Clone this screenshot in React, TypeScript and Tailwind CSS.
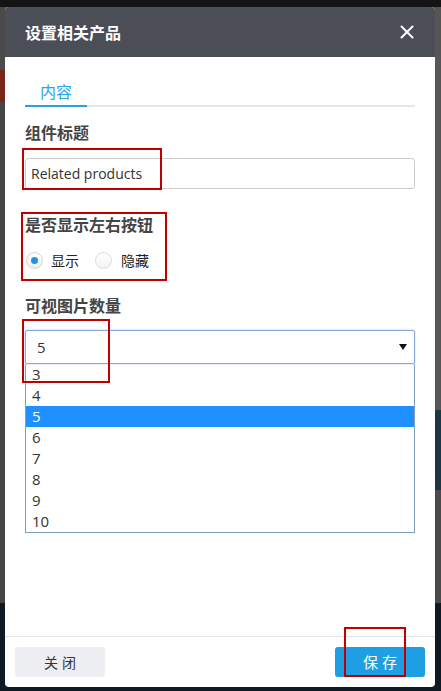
import React from "react";

const cjk = { fontFamily: '"Noto Sans CJK SC", "Noto Sans", sans-serif' };
const latin = { fontFamily: '"Open Sans", "Noto Sans CJK SC", sans-serif' };

export default function App() {
  const options = ["3", "4", "5", "6", "7", "8", "9", "10"];
  return (
    <div className="relative w-[441px] h-[691px] overflow-hidden bg-[#474747]" style={cjk}>
      {/* dimmed background page */}
      <div className="flex flex-col h-full">
        <div className="h-[7px] bg-[#141414]" />
        <div className="flex-1 flex justify-between">
          <div className="w-[5px] flex flex-col">
            <div className="h-[63px] bg-[#4a4a4a]" />
            <div className="h-[32px] bg-[#7a241c]" />
            <div className="flex-1 bg-[#454545]" />
          </div>
          <div className="w-[6px] flex flex-col">
            <div className="h-[403px] bg-[#565656]" />
            <div className="h-[80px] bg-[#1c3644]" />
            <div className="flex-1 bg-[#4a4a4a]" />
          </div>
        </div>
        <div className="h-[88px] bg-[#0f1a22]" />
      </div>

      {/* modal */}
      <div className="absolute left-[5px] top-[7px] w-[430px] h-[680px] bg-white rounded-[4px] flex flex-col overflow-hidden">
        <div className="h-[50px] bg-[#4b4e57] px-[20px] flex items-center justify-between shrink-0">
          <span className="text-white text-[16px] font-bold leading-[24px]">设置相关产品</span>
          <svg width="14" height="14" viewBox="0 0 14 14" className="mr-[1px]">
            <path d="M1.5 1.5 L12.5 12.5 M12.5 1.5 L1.5 12.5" stroke="#ffffff" strokeWidth="2" strokeLinecap="round" />
          </svg>
        </div>

        <div className="flex-1 px-[20px] pt-[22px] flex flex-col">
          <div className="flex border-b-2 border-[#e6e6e6]">
            <div className="-mb-[2px] border-b-2 border-[#2b9fe0] px-[15px] pb-[2px] text-[16px] leading-[24px] text-[#2aa3e8]">
              内容
            </div>
          </div>

          <div className="mt-[13px] text-[16px] leading-[24px] font-bold text-[#444]">组件标题</div>
          <div className="mt-[14px] h-[31px] border border-[#cccccc] rounded-[3px] flex items-center px-[5px]">
            <span className="text-[14px] text-[#333]" style={latin}>Related products</span>
          </div>

          <div className="mt-[23px] text-[16px] leading-[24px] font-bold text-[#444]">是否显示左右按钮</div>
          <div className="mt-[12px] h-[24px] flex items-center">
            <span className="w-[17px] h-[17px] ml-[1px] rounded-full border border-[#d4d4d4] bg-gradient-to-b from-white to-[#f0f0f0] flex items-center justify-center">
              <span className="w-[7px] h-[7px] rounded-full bg-[#1e96e6]" />
            </span>
            <span className="ml-[8px] text-[14px] text-[#222]">显示</span>
            <span className="ml-[16px] w-[17px] h-[17px] rounded-full border border-[#dcdcdc] bg-gradient-to-b from-white to-[#f3f3f3]" />
            <span className="ml-[9px] text-[14px] text-[#222]">隐藏</span>
          </div>

          <div className="mt-[21px] text-[16px] leading-[24px] font-bold text-[#444]">可视图片数量</div>
          <div className="mt-[13px] h-[34px] border border-[#8aa6da] rounded-[2px] flex items-center justify-between pl-[11px] pr-[7px] shadow-[0_0_2px_rgba(100,140,220,0.5)]">
            <span className="text-[15px] text-[#333]" style={latin}>5</span>
            <svg width="8" height="6" viewBox="0 0 8 6">
              <path d="M0 0 H8 L4 6 Z" fill="#111" />
            </svg>
          </div>
          <div className="border border-t-0 border-[#7f9db9] flex flex-col">
            {options.map((o) => (
              <div
                key={o}
                className={
                  o === "5"
                    ? "h-[21px] flex items-center px-[6px] text-[15px] bg-[#1e90ff] text-white"
                    : "h-[21px] flex items-center px-[6px] text-[15px] text-[#333]"
                }
                style={latin}
              >
                {o}
              </div>
            ))}
          </div>
        </div>

        <div className="border-t border-[#e5e5e5] px-[10px] py-[10px] flex justify-between shrink-0">
          <div className="w-[90px] h-[30px] rounded-[3px] bg-[#eceef2] flex items-center justify-center text-[14px] tracking-[4px] text-[#333] pl-[4px]">
            关闭
          </div>
          <div className="w-[90px] h-[30px] rounded-[3px] bg-[#1f9fe3] flex items-center justify-center text-[15px] tracking-[4px] text-white pl-[4px]">
            保存
          </div>
        </div>
      </div>

      {/* red annotation boxes */}
      <div className="absolute left-[22px] top-[148px] w-[140px] h-[42px] border-2 border-[#c00000]" />
      <div className="absolute left-[21px] top-[212px] w-[146px] h-[69px] border-2 border-[#c00000]" />
      <div className="absolute left-[22px] top-[319px] w-[88px] h-[64px] border-2 border-[#c00000]" />
      <div className="absolute left-[344px] top-[627px] w-[62px] h-[50px] border-2 border-[#c00000]" />
    </div>
  );
}
